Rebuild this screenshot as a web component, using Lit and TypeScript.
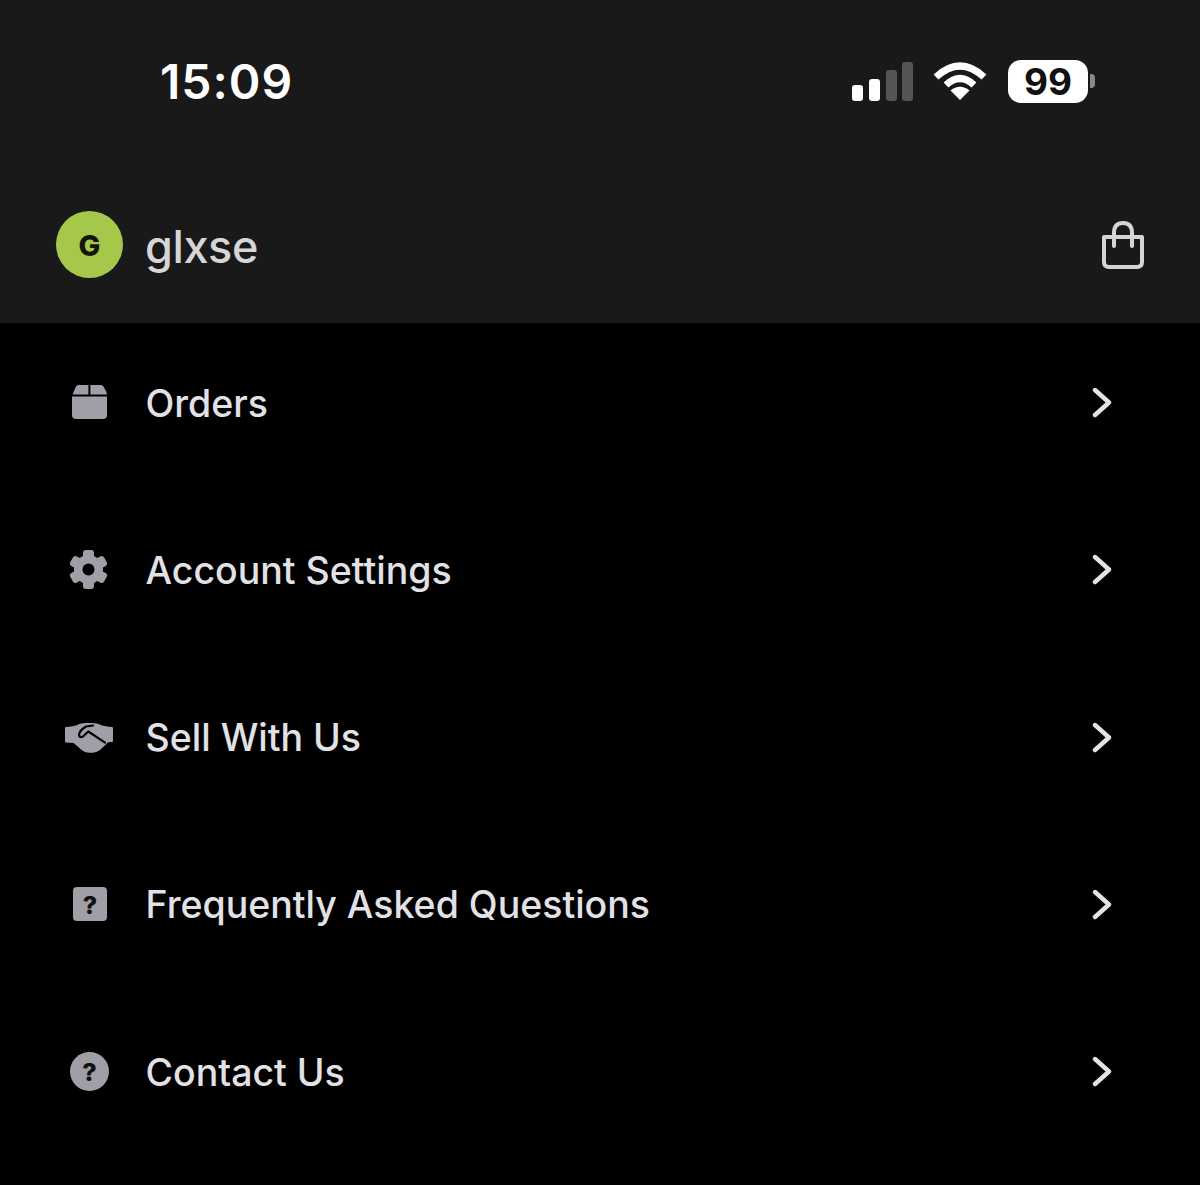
import { LitElement, html, css, svg } from "lit";
import { customElement } from "lit/decorators.js";

const ICON = "#a09fa7";
const q = (cx: number, cy: number) => svg`<text x="${cx}" y="${cy}" text-anchor="middle" class="q">?</text>`;
const icons = {
  box: svg`<path d="M18.5 12H28.4V21.5H12.8Q13 20 14 18L16 13.5Q16.8 12 18.5 12Z" fill="${ICON}"/><path d="M30.4 12H41Q42.6 12 43.4 13.5L46 18Q46.8 20 47 21.5H30.4Z" fill="${ICON}"/><path d="M12 23.6H47V42Q47 46 43 46H16Q12 46 12 42Z" fill="${ICON}"/>`,
  gear: svg`<g transform="translate(28.5 29.5)" fill="${ICON}"><circle r="14.5"/><rect x="-5.5" y="-19.5" width="11" height="39" rx="3"/><rect x="-5.5" y="-19.5" width="11" height="39" rx="3" transform="rotate(60)"/><rect x="-5.5" y="-19.5" width="11" height="39" rx="3" transform="rotate(120)"/><circle r="6" fill="#000"/></g>`,
  hands: svg`<path d="M6 20Q12 20 16 18.5Q20 16 25 16L33 16Q38 16 42 18.5Q47 20 52 20V33Q47 33 46 35L39 41.5Q35 44.5 31 43.5Q26 44.5 22 41L14 34Q10 33.5 6 33.5Z" fill="${ICON}" stroke="${ICON}" stroke-width="2" stroke-linejoin="round"/><path d="M33 17.5L26 18.5Q20 22 19 26.5Q19.5 30.5 23 28.5L28.3 23.5L45 34.7" fill="none" stroke="#000" stroke-width="2.2" stroke-linecap="round" stroke-linejoin="round"/>`,
  faq: svg`<rect x="13" y="12" width="34" height="34" rx="4" fill="${ICON}"/>${q(30, 38.5)}`,
  help: svg`<circle cx="29.5" cy="29.5" r="19.5" fill="${ICON}"/>${q(29.5, 38.5)}`,
};

const rows: [string, keyof typeof icons][] = [
  ["Orders", "box"],
  ["Account Settings", "gear"],
  ["Sell With Us", "hands"],
  ["Frequently Asked Questions", "faq"],
  ["Contact Us", "help"],
];

@customElement("app-root")
export class AppRoot extends LitElement {
  static styles = css`
    :host { display: block; width: 1200px; height: 1185px; background: #000; font-family: Inter, "Liberation Sans", sans-serif; overflow: hidden; }
    .head { background: #19191a; height: 323px; box-sizing: border-box; display: flex; flex-direction: column; }
    .status { height: 162px; display: flex; align-items: center; justify-content: space-between; padding: 0 105px 0 160px; }
    .time { color: #fff; font-size: 48px; font-weight: 600; letter-spacing: 1px; }
    .sys { display: flex; align-items: center; gap: 21px; }
    .sig { margin-right: -1px; }
    .batt { display: flex; align-items: center; gap: 2px; }
    .cell { width: 80px; height: 43px; border-radius: 13px; background: #fff; color: #111; font-size: 37px; font-weight: 700; display: flex; align-items: center; justify-content: center; }
    .nub { width: 5px; height: 14px; background: #8a8a8a; border-radius: 0 4px 4px 0; }
    .user { margin-top: 49px; display: flex; align-items: center; padding: 0 55px 0 56px; }
    .avatar { width: 67px; height: 67px; border-radius: 50%; background: #a5c84a; color: #12160a; font-size: 29px; font-weight: 800; padding-top: 2px; box-sizing: border-box; display: flex; align-items: center; justify-content: center; }
    .name { margin-left: 22px; padding-top: 4px; flex: 1; color: #d6d6d8; font-size: 45px; font-weight: 500; letter-spacing: -0.4px; }
    .list { padding-top: 50px; display: flex; flex-direction: column; gap: 107.25px; }
    .row { height: 60px; display: flex; align-items: center; padding: 0 88px 0 60px; }
    .row svg.ic { width: 60px; height: 60px; flex: none; }
    .label { margin-left: 25.5px; flex: 1; color: #e2e2e6; font-size: 37.5px; font-weight: 500; }
    .q { font-family: Inter, sans-serif; font-size: 25px; font-weight: 800; fill: #111; }
    svg { display: block; }
  `;

  render() {
    return html`
      <div class="head">
        <div class="status">
          <span class="time">15:09</span>
          <div class="sys">
            <svg class="sig" width="61" height="39" viewBox="0 0 61 39">
              <rect x="0" y="23" width="11" height="16" rx="3" fill="#fff"/>
              <rect x="17" y="17" width="11" height="22" rx="3" fill="#fff"/>
              <rect x="34" y="8" width="11" height="31" rx="3" fill="#555"/>
              <rect x="50" y="0" width="11" height="39" rx="3" fill="#555"/>
            </svg>
            <svg width="54" height="38" viewBox="0 0 54 38">
              <path d="M3 15Q27 -7 51 15" fill="none" stroke="#fff" stroke-width="7"/>
              <path d="M13 23Q27 10 41 23" fill="none" stroke="#fff" stroke-width="7"/>
              <path d="M27 38L17.5 28.5Q27 21 36.5 28.5Z" fill="#fff"/>
            </svg>
            <div class="batt"><div class="cell">99</div><div class="nub"></div></div>
          </div>
        </div>
        <div class="user">
          <div class="avatar">G</div>
          <span class="name">glxse</span>
          <svg width="44" height="48" viewBox="0 0 44 48" fill="none" stroke="#d5d5d7" stroke-width="4" stroke-linecap="round" stroke-linejoin="round">
            <path d="M3 16H41V41Q41 46 36 46H8Q3 46 3 41Z"/>
            <path d="M13 25V12Q13 2 22 2Q31 2 31 12V25"/>
          </svg>
        </div>
      </div>
      <div class="list">
        ${rows.map(([t, i]) => html`
          <div class="row">
            <svg class="ic" viewBox="0 0 60 60">${icons[i]}</svg>
            <span class="label">${t}</span>
            <svg width="20" height="32" viewBox="0 0 20 32" fill="none" stroke="#e4e4e8" stroke-width="4.4" stroke-linecap="round" stroke-linejoin="round">
              <path d="M3 3L17 15.5L3 28"/>
            </svg>
          </div>`)}
      </div>
    `;
  }
}
